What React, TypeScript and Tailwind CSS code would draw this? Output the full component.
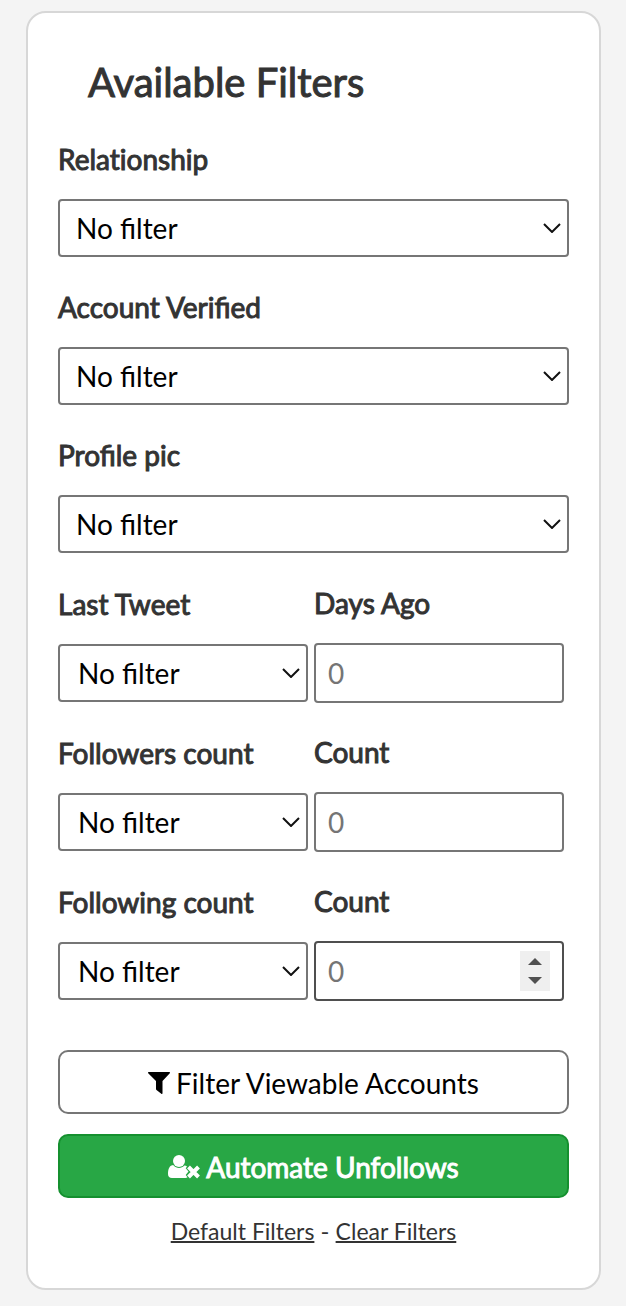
import React, { useState } from "react";

const FILTER_OPTIONS = ["No filter", "Yes", "No"];
const COUNT_OPTIONS = ["No filter", "More than", "Less than"];

const Label: React.FC<{ htmlFor: string; children: React.ReactNode }> = ({ htmlFor, children }) => (
  <label
    htmlFor={htmlFor}
    className="block mb-6 text-[28px] leading-[32px] whitespace-nowrap [-webkit-text-stroke:1px_#333333]"
  >
    {children}
  </label>
);

const Select: React.FC<{ id: string; options: string[]; className: string }> = ({
  id,
  options,
  className,
}) => (
  <div className="relative">
    <select
      id={id}
      className={`block w-full h-[58px] appearance-none rounded-[4px] border-2 border-[#767676] bg-white pr-8 text-[28px] leading-[34px] text-black ${className}`}
    >
      {options.map((option) => (
        <option key={option}>{option}</option>
      ))}
    </select>
    <svg
      viewBox="0 0 18 10"
      className="pointer-events-none absolute right-[8px] top-[24px] w-[18px] h-[10px]"
      fill="none"
      stroke="#111111"
      strokeWidth="2"
    >
      <path d="M1 1l8 8 8-8" />
    </svg>
  </div>
);

const SelectFilter: React.FC<{ id: string; label: React.ReactNode }> = ({ id, label }) => (
  <div>
    <Label htmlFor={id}>{label}</Label>
    <Select id={id} options={FILTER_OPTIONS} className="pl-4" />
  </div>
);

const NumberFilter: React.FC<{
  id: string;
  label: string;
  valueLabel: string;
  active?: boolean;
}> = ({ id, label, valueLabel, active }) => {
  const [value, setValue] = useState("");
  const step = (delta: number) => setValue(String(Math.max(0, Number(value) + delta)));

  return (
    <div className="grid grid-cols-2 items-center gap-[6px] pr-[5px]">
      <div>
        <Label htmlFor={id}>{label}</Label>
        <Select id={id} options={COUNT_OPTIONS} className="pl-[18px]" />
      </div>
      <div>
        <Label htmlFor={`${id}-value`}>{valueLabel}</Label>
        <div className="relative">
          <input
            id={`${id}-value`}
            type="number"
            min={0}
            placeholder="0"
            value={value}
            onChange={(e) => setValue(e.target.value)}
            className={`block w-full h-[60px] rounded-[4px] border-2 bg-white px-3 text-[28px] leading-[34px] text-black placeholder:text-[#757575] [appearance:textfield] ${
              active ? "border-[#4f4f4f]" : "border-[#767676]"
            }`}
          />
          {active && (
            <div className="absolute right-[14px] top-[10px] flex h-[40px] w-[30px] flex-col bg-[#efefef]">
              <button
                type="button"
                aria-label="Increase"
                onClick={() => step(1)}
                className="flex flex-1 items-end justify-center pb-[6px]"
              >
                <svg viewBox="0 0 14 7" className="w-[14px] h-[7px]" fill="#505050">
                  <path d="M0 7l7-7 7 7z" />
                </svg>
              </button>
              <button
                type="button"
                aria-label="Decrease"
                onClick={() => step(-1)}
                className="flex flex-1 items-start justify-center pt-[6px]"
              >
                <svg viewBox="0 0 14 7" className="w-[14px] h-[7px]" fill="#505050">
                  <path d="M0 0l7 7 7-7z" />
                </svg>
              </button>
            </div>
          )}
        </div>
      </div>
    </div>
  );
};

const FunnelIcon = () => (
  <svg viewBox="0 0 22 22" className="w-[22px] h-[22px]" fill="currentColor">
    <path d="M.5 0h21c.5 0 .6.700.3 1.200L14.500 9v12.300c0 .7-.6.900-1.200.5L8.500 18c-.4-.3-.5-.6-.5-1V9L.2 1.200C-.1.700 0 0 .5 0z" />
  </svg>
);

const UserRemoveIcon = () => (
  <svg viewBox="0 0 32 24" className="w-[32px] h-[24px]" fill="currentColor">
    <circle cx="11" cy="6" r="6" />
    <path d="M5.500 10.500C7 12 9 13 11 13s4-1 5.500-2.500c1 .1 1.900.5 2.500 1l-1.300 1.800 2.800 3.200-2.800 3.500 1.800 2.300c-.6.500-1.200.7-2 .7H4c-2.500 0-4-1.500-4-4 0-5 1.500-9 5.500-9z" />
    <path d="M20.500 12l10 10M30.500 12l-10 10" fill="none" stroke="currentColor" strokeWidth="4" />
  </svg>
);

export default function App() {
  return (
    <main className="min-h-screen bg-[#f4f4f4] pt-[11px] pb-4 pl-[26px] pr-[25px] font-['Lato',sans-serif] text-[#333333]">
      <form
        onSubmit={(e) => e.preventDefault()}
        className="rounded-[20px] border-2 border-[#d7d7d7] bg-white px-[30px] pt-[45px] pb-[41px]"
      >
        <h2 className="mb-[37px] pl-[30px] text-[40px] leading-[48px] [-webkit-text-stroke:1px_#333333]">
          Available Filters
        </h2>

        <div className="flex flex-col gap-[34px]">
          <SelectFilter
            id="relationship"
            label={<span className="[font-variant-ligatures:none]">Relationship</span>}
          />
          <SelectFilter id="verified" label="Account Verified" />
          <SelectFilter id="profile-pic" label="Profile pic" />
          <div className="flex flex-col gap-[33px]">
            <NumberFilter id="last-tweet" label="Last Tweet" valueLabel="Days Ago" />
            <NumberFilter id="followers" label="Followers count" valueLabel="Count" />
            <NumberFilter id="following" label="Following count" valueLabel="Count" active />
          </div>
        </div>

        <div className="mt-[49px] flex flex-col gap-5 text-[28px] leading-[34px]">
          <button
            type="submit"
            className="flex h-[64px] items-center justify-center gap-[6px] rounded-[10px] border-2 border-[#767676] bg-white pt-[2px] text-black"
          >
            <FunnelIcon />
            Filter Viewable Accounts
          </button>
          <button
            type="button"
            className="flex h-[64px] items-center justify-center gap-[6px] rounded-[10px] border-2 border-[#15902f] bg-[#28a745] pt-[2px] text-white"
          >
            <UserRemoveIcon />
            <span className="[-webkit-text-stroke:1px_#ffffff]">Automate Unfollows</span>
          </button>
        </div>

        <p className="mt-4 text-center text-2xl leading-[33px]">
          <a href="#default" className="text-[23px] leading-[32px] underline decoration-2">Default Filters</a>
          {" - "}
          <a href="#clear" className="text-[23px] leading-[32px] underline decoration-2">Clear Filters</a>
        </p>
      </form>
    </main>
  );
}
